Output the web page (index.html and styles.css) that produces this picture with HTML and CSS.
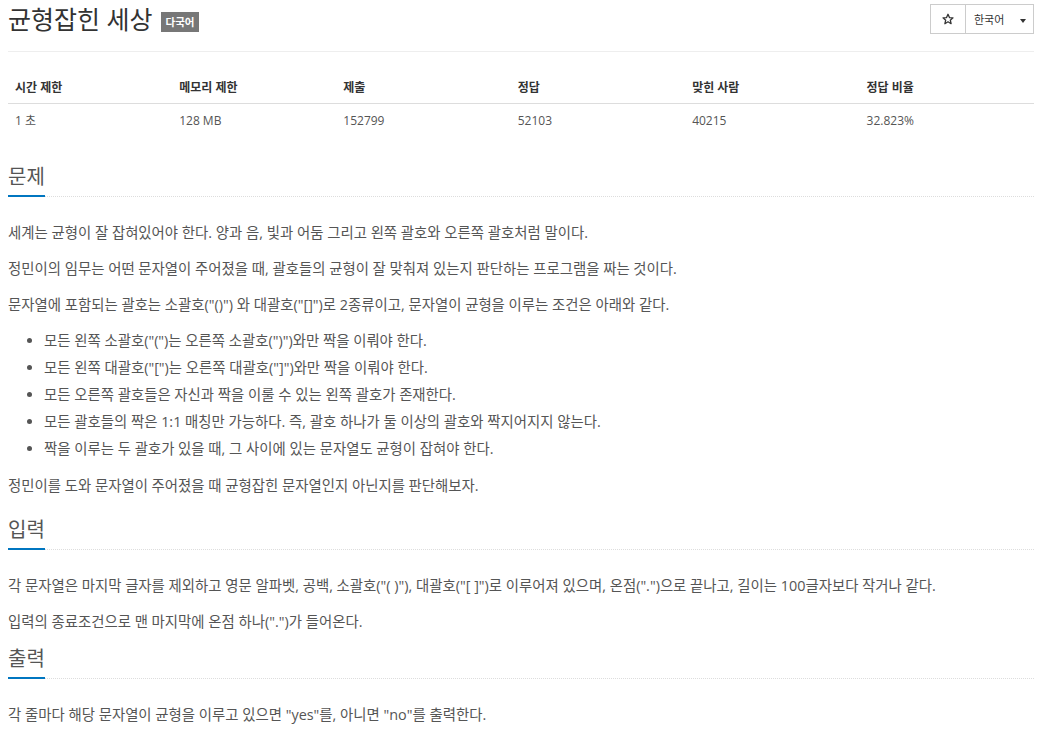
FILE: index.html
```html
<!DOCTYPE html>
<html lang="ko">
<head>
  <meta charset="UTF-8" />
  <meta name="viewport" content="width=device-width, initial-scale=1" />
  <title>균형잡힌 세상</title>
  <link rel="stylesheet" href="styles.css">
</head>
<body>

<div class="page">
  <div class="page-header">
    <h1 class="title">균형잡힌 세상 <span class="label">다국어</span></h1>
    <div class="btn-group">
      <button class="btn btn-star" title="즐겨찾기">
        <svg width="12" height="12" viewBox="0 0 24 24"><path d="M12 2.5l2.9 6.6 7.1.6-5.4 4.7 1.6 7-6.2-3.8-6.2 3.8 1.6-7L2 9.7l7.1-.6z" fill="none" stroke="#333" stroke-width="2.6" stroke-linejoin="round"/></svg>
      </button>
      <button class="btn btn-lang">한국어 <span class="caret"></span></button>
    </div>
  </div>

  <table class="problem-info">
    <thead>
      <tr>
        <th class="narrow">시간 제한</th>
        <th class="narrow">메모리 제한</th>
        <th>제출</th>
        <th>정답</th>
        <th>맞힌 사람</th>
        <th>정답 비율</th>
      </tr>
    </thead>
    <tbody>
      <tr>
        <td>1 초</td>
        <td>128 MB</td>
        <td>152799</td>
        <td>52103</td>
        <td>40215</td>
        <td>32.823%</td>
      </tr>
    </tbody>
  </table>

  <section class="section section-first">
    <h2 class="headline"><span>문제</span></h2>
    <p>세계는 균형이 잘 잡혀있어야 한다. 양과 음, 빛과 어둠 그리고 왼쪽 괄호와 오른쪽 괄호처럼 말이다.</p>
    <p>정민이의 임무는 어떤 문자열이 주어졌을 때, 괄호들의 균형이 잘 맞춰져 있는지 판단하는 프로그램을 짜는 것이다.</p>
    <p>문자열에 포함되는 괄호는 소괄호("()") 와 대괄호("[]")로 2종류이고, 문자열이 균형을 이루는 조건은 아래와 같다.</p>
    <ul>
      <li>모든 왼쪽 소괄호("(")는 오른쪽 소괄호(")")와만 짝을 이뤄야 한다.</li>
      <li>모든 왼쪽 대괄호("[")는 오른쪽 대괄호("]")와만 짝을 이뤄야 한다.</li>
      <li>모든 오른쪽 괄호들은 자신과 짝을 이룰 수 있는 왼쪽 괄호가 존재한다.</li>
      <li>모든 괄호들의 짝은 1:1 매칭만 가능하다. 즉, 괄호 하나가 둘 이상의 괄호와 짝지어지지 않는다.</li>
      <li>짝을 이루는 두 괄호가 있을 때, 그 사이에 있는 문자열도 균형이 잡혀야 한다.</li>
    </ul>
    <p>정민이를 도와 문자열이 주어졌을 때 균형잡힌 문자열인지 아닌지를 판단해보자.</p>
  </section>

  <section class="section">
    <h2 class="headline"><span>입력</span></h2>
    <p>각 문자열은 마지막 글자를 제외하고 영문 알파벳, 공백, 소괄호("( )"), 대괄호("[ ]")로 이루어져 있으며, 온점(".")으로 끝나고, 길이는 100글자보다 작거나 같다.</p>
    <p>입력의 종료조건으로 맨 마지막에 온점 하나(".")가 들어온다.</p>
  </section>

  <section class="section">
    <h2 class="headline"><span>출력</span></h2>
    <p>각 줄마다 해당 문자열이 균형을 이루고 있으면 "yes"를, 아니면 "no"를 출력한다.</p>
  </section>
</div>

</body>
</html>
```

FILE: styles.css
```css
:root {
  --text: #555;
  --text-dark: #333;
  --border: #ddd;
  --border-light: #eee;
  --primary: #0076c0;
}

body {
  margin: 0;
  font-family: 'Open Sans', 'Noto Sans CJK KR', sans-serif;
  font-size: 14.4px;
  color: var(--text);
  background: #fff;
}

.page {
  padding: 0 4px 0 8px;
}

.page-header {
  display: flex;
  justify-content: space-between;
  align-items: center;
  padding: 4px 0 17px;
  border-bottom: 1px solid var(--border-light);
}

.title {
  margin: 0;
  font-size: 25px;
  font-weight: normal;
  line-height: 30px;
  color: var(--text-dark);
  display: flex;
  align-items: center;
}

.label {
  display: inline-block;
  margin-left: 8px;
  margin-top: 6px;
  background: #777;
  color: #fff;
  font-size: 10.5px;
  font-weight: bold;
  line-height: 20px;
  padding: 0 5px;
}

.btn-group {
  display: flex;
}

.btn {
  height: 30px;
  background: #fff;
  border: 1px solid #ccc;
  font-family: inherit;
  color: var(--text-dark);
  cursor: pointer;
  white-space: nowrap;
}

.btn-star {
  width: 36px;
  padding: 0;
  display: flex;
  align-items: center;
  justify-content: center;
}

.btn-lang {
  margin-left: -1px;
  width: 69px;
  padding: 0 0 0 8px;
  font-size: 11px;
  text-align: left;
}

.caret {
  display: inline-block;
  width: 0;
  height: 0;
  margin-left: 13px;
  vertical-align: middle;
  border-top: 4px solid var(--text-dark);
  border-left: 3px solid transparent;
  border-right: 3px solid transparent;
}

.problem-info {
  width: 100%;
  border-collapse: collapse;
  margin: 16px 0 27px;
  font-size: 12px;
}

.problem-info th {
  width: 17%;
  text-align: left;
  font-weight: bold;
  color: var(--text-dark);
  line-height: 18px;
  padding: 11px 7px 6px;
  border-bottom: 1px solid var(--border);
}

.problem-info th.narrow {
  width: 16%;
}

.problem-info td {
  line-height: 18px;
  padding: 8px 7px 8px;
}

.section-first {
  margin-bottom: 22px;
}

.headline {
  margin: 14px 0 25px;
  font-size: 20px;
  font-weight: normal;
  line-height: 24px;
  border-bottom: 1px dotted var(--border);
}

.headline span {
  display: inline-block;
  padding-bottom: 6px;
  margin-bottom: -1px;
  border-bottom: 2px solid var(--primary);
}

p {
  margin: 0 0 15px;
  line-height: 21px;
}

ul {
  margin: 0 0 16px;
  padding-left: 36px;
}

li {
  line-height: 21px;
  margin-bottom: 6px;
}
```
